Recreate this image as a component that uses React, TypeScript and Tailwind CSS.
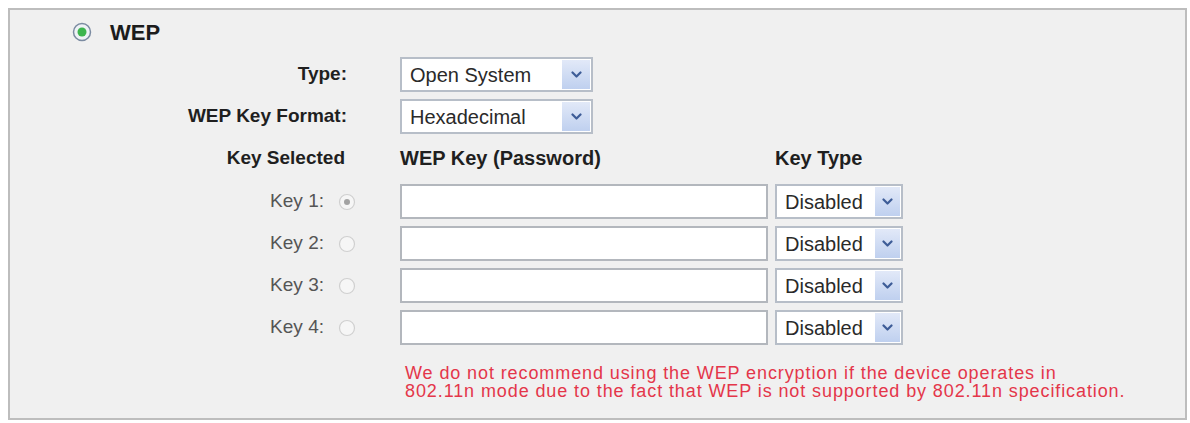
// WEP security panel: key type / format selects, four key rows and a note.

const KEYS = [1, 2, 3, 4]

function Chevron() {
  return (
    <svg width="11" height="8" viewBox="0 0 11 8" className="block">
      <path d="M1.5 1.5 L5.5 5.5 L9.5 1.5" fill="none" stroke="#3d5c97" strokeWidth="2.2" strokeLinecap="round" strokeLinejoin="round" />
    </svg>
  )
}

function Select({ value, width, arrow }: { value: string; width: string; arrow: string }) {
  return (
    <div className={`flex h-[35px] ${width} items-stretch border-2 border-[#b7bec8] bg-white`}>
      <span className="flex flex-1 items-center pl-[8px] text-[20px] text-[#2a2a2a]">{value}</span>
      <span className={`m-[1px] flex ${arrow} items-center justify-center bg-gradient-to-b from-[#e2e9f8] to-[#bfd0ef]`}>
        <Chevron />
      </span>
    </div>
  )
}

function Radio({ checked, disabled }: { checked: boolean; disabled?: boolean }) {
  if (disabled) {
    return (
      <svg width="18" height="18" viewBox="0 0 18 18" className="block">
        <circle cx="9" cy="9" r="7.5" fill="#f6f6f6" stroke="#d0d0d0" strokeWidth="1.2" />
        {checked && <circle cx="9" cy="9" r="3" fill="#a3a3a3" />}
      </svg>
    )
  }
  return (
    <svg width="20" height="20" viewBox="0 0 20 20" className="block">
      <circle cx="10" cy="10" r="8.5" fill="#eef2f6" stroke="#7b8ba1" strokeWidth="1.5" />
      {checked && <circle cx="10" cy="10" r="4.5" fill="#3cb54e" />}
    </svg>
  )
}

function Row({ label, children, className = '' }: { label: React.ReactNode; children: React.ReactNode; className?: string }) {
  return (
    <div className={`flex items-center ${className}`}>
      <div className="flex w-[346px] shrink-0 items-center justify-end">{label}</div>
      <div className="ml-[44px] flex items-center">{children}</div>
    </div>
  )
}

export default function App() {
  return (
    <div className="h-[423px] w-[1190px] bg-white p-[8px] font-['Liberation_Sans',Arial,sans-serif]">
      <div className="flex h-[412px] w-[1179px] flex-col border-2 border-[#bdbdbd] bg-[#f0f0f0]">
        <div className="mt-[10px] flex h-[24px] items-center pl-[62px]">
          <Radio checked />
          <span className="ml-[18px] text-[22px] font-bold text-[#1c1c1c]">WEP</span>
        </div>

        <Row className="mt-[13px] h-[35px]" label={<span className="pr-[9px] text-[19px] font-bold text-[#1f1f1f]">Type:</span>}>
          <Select value="Open System" width="w-[193px]" arrow="w-[28px]" />
        </Row>
        <Row className="mt-[7px] h-[35px]" label={<span className="pr-[9px] text-[19px] font-bold text-[#1f1f1f]">WEP Key Format:</span>}>
          <Select value="Hexadecimal" width="w-[193px]" arrow="w-[28px]" />
        </Row>

        <Row className="mt-[12px] h-[24px]" label={<span className="pr-[11px] text-[19px] font-bold text-[#1f1f1f]">Key Selected</span>}>
          <span className="w-[375px] text-[20px] font-bold text-[#1f1f1f]">WEP Key (Password)</span>
          <span className="text-[20px] font-bold text-[#1f1f1f]">Key Type</span>
        </Row>

        <div className="mt-[14px] flex flex-col gap-[7px]">
          {KEYS.map((k) => (
            <Row
              key={k}
              className="h-[35px]"
              label={
                <>
                  <span className="text-[19px] text-[#555]">Key {k}:</span>
                  <span className="ml-[14px]">
                    <Radio checked={k === 1} disabled />
                  </span>
                </>
              }
            >
              <div className="h-[35px] w-[368px] border-2 border-[#b3b7bd] bg-white" />
              <div className="ml-[7px]">
                <Select value="Disabled" width="w-[128px]" arrow="w-[25px]" />
              </div>
            </Row>
          ))}
        </div>

        <p className="mt-[19px] ml-[395px] text-[18px] leading-[18px] tracking-[0.9px] text-[#e4364a]">
          We do not recommend using the WEP encryption if the device operates in
          <br />
          802.11n mode due to the fact that WEP is not supported by 802.11n specification.
        </p>
      </div>
    </div>
  )
}
